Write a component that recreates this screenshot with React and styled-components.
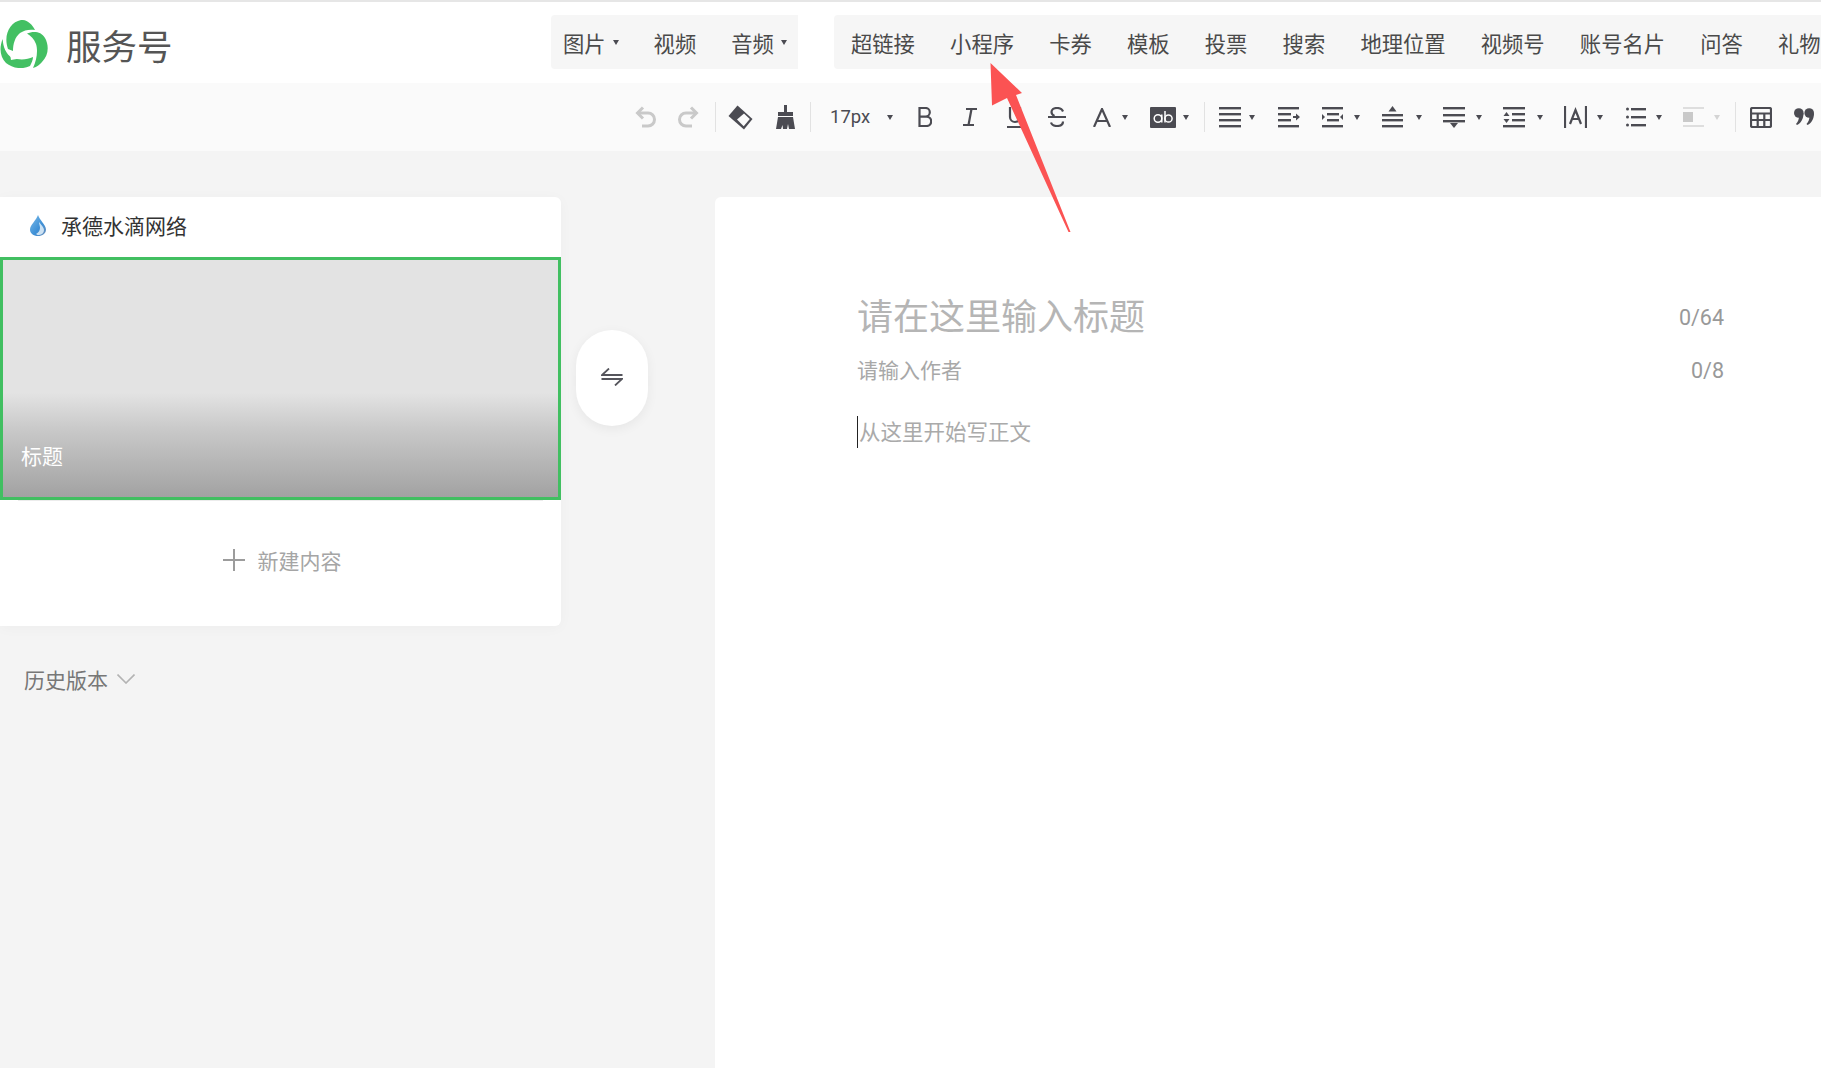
import React from 'react';
import styled, {createGlobalStyle} from 'styled-components';

const GlobalStyle = createGlobalStyle`
    html, body {
        margin: 0;
        padding: 0;
        height: 100%;
        background: #f4f4f4;
        overflow: hidden;
    }
    body {
        font-family: "Noto Sans", "Noto Sans CJK SC", sans-serif;
    }
`

const INK = '#4b4b52'
const OFF = '#c9c9c9'

const Undo = ({flip, color = OFF}) => (
    <svg width="21" height="22" viewBox="0 0 21 22" fill="none" stroke={color} strokeWidth="3" style={flip ? {transform: 'scaleX(-1)'} : undefined}>
        <path d="M3 7h10a6 6 0 0 1 0 13H7" />
        <path d="M8 1.500 2.500 7 8 12.500" />
    </svg>
)

const Eraser = () => (
    <svg width="25" height="25" viewBox="0 0 25 25">
        <path d="M9.500 0.500 24.500 14 16 24.500 0.500 11Z" fill={INK} />
        <path d="M9 14.500 16 8.500 21.800 14 15.700 21.300Z" fill="#fafafa" />
    </svg>
)

const Brush = () => (
    <svg width="19" height="24" viewBox="0 0 19 24" fill={INK}>
        <rect x="8" y="0" width="3" height="8" />
        <rect x="2" y="7" width="15" height="4" />
        <path d="M2 12h15l2 12h-6l-1-5-1 5H7l-.5-4-1.500 4H0Z" />
    </svg>
)

const Bold = () => (
    <svg width="14" height="20" viewBox="0 0 14 20" fill="none" stroke={INK} strokeWidth="2.200">
        <path d="M1.500 1h6a4.300 4.300 0 0 1 0 8.600h-6Zm0 8.600h7a4.700 4.700 0 0 1 0 9.400h-7Z" />
    </svg>
)

const Italic = () => (
    <svg width="14" height="18" viewBox="0 0 14 18" fill="none" stroke={INK} strokeWidth="2.200">
        <path d="M3 1h11M0 17h11M8.500 1 5.500 17" />
    </svg>
)

const Underline = () => (
    <svg width="16" height="22" viewBox="0 0 16 22" fill="none" stroke={INK} strokeWidth="2.200">
        <path d="M3 1v10a5 5 0 0 0 10 0V1M0 21h16" />
    </svg>
)

const Strike = () => (
    <svg width="18" height="20" viewBox="0 0 18 20" fill="none" stroke={INK} strokeWidth="2.200">
        <path d="M0 10h18M15 4.500C14 2 12 1 9 1 5.500 1 3.500 2.700 3.500 5c0 1.500 1 3 3 4M15 14.500c0 2.800-2.500 4.500-6 4.500-3 0-5.300-1.200-6-3.500" />
    </svg>
)

const LetterA = () => (
    <svg width="18" height="19" viewBox="0 0 18 19" fill="none" stroke={INK} strokeWidth="2.200">
        <path d="M1 19 9 1l8 18M4 13h10" />
    </svg>
)

const Highlight = () => (
    <svg width="26" height="21" viewBox="0 0 26 21">
        <rect width="26" height="21" rx="1" fill={INK} />
        <circle cx="8" cy="11.500" r="3.800" fill="none" stroke="#fff" strokeWidth="1.500" />
        <path d="M11.800 7.500V15.500M15 4v11.500" stroke="#fff" strokeWidth="1.500" />
        <circle cx="18.500" cy="11.500" r="3.600" fill="none" stroke="#fff" strokeWidth="1.500" />
    </svg>
)

// horizontal rules, all the paragraph icons are built from these
const Lines = ({rows, extra, color = INK}) => (
    <svg width="22" height="22" viewBox="0 0 22 22" fill={color}>
        {rows.map(([x, y, w], i) => <rect key={i} x={x} y={y} width={w} height="2.400" />)}
        {extra}
    </svg>
)

const alignRows = [[0, 1, 22], [0, 7, 22], [0, 13, 22], [0, 19, 22]]
const indentRows = [[0, 1, 21], [0, 7, 13], [0, 13, 13], [0, 19, 21]]
const outdentRows = [[0, 1, 21], [5, 7, 12], [5, 13, 12], [0, 19, 21]]
const aboveRows = [[0, 8, 21], [0, 13, 21], [0, 19, 21]]
const belowRows = [[0, 1, 22], [0, 8, 22], [0, 14, 22]]
const heightRows = [[0, 1, 22], [9, 7, 13], [9, 13, 13], [0, 19, 22]]
const listRows = [[5, 2, 15], [5, 10, 15], [5, 18, 15]]

const LetterSpacing = () => (
    <svg width="23" height="22" viewBox="0 0 23 22" fill="none" stroke={INK} strokeWidth="2.200">
        <path d="M1 0v22M22 0v22M6 18 11.500 4 17 18M8 13h7" />
    </svg>
)

const Picture = () => (
    <svg width="22" height="22" viewBox="0 0 22 22" fill={OFF}>
        <rect x="0" y="1" width="21" height="2" fill="#dedede" />
        <rect x="0" y="6" width="10" height="10" />
        <rect x="0" y="19" width="21" height="2" fill="#dedede" />
    </svg>
)

const TableIcon = () => (
    <svg width="22" height="21" viewBox="0 0 22 21" fill="none" stroke={INK} strokeWidth="2.200">
        <rect x="1" y="1" width="20" height="19" rx="1.500" />
        <path d="M1 6.500h20M1 13h20M7.700 6.500V20M14.300 6.500V20" />
    </svg>
)

const Quote = () => (
    <svg width="20" height="18" viewBox="0 0 20 18" fill={INK}>
        <circle cx="4.800" cy="5" r="4.800" />
        <path d="M9.500 5C9.500 11 7 15 3 17l-1-1c2-2 3-5 3-8Z" />
        <circle cx="15.200" cy="5" r="4.800" />
        <path d="M20 5c0 6-2.500 10-6.500 12l-1-1c2-2 3-5 3-8Z" />
    </svg>
)

const Logo = () => (
    <svg width="48" height="48" viewBox="0 0 48 48" fill="#43c063">
        <path d="M8 29C3 15 10 2 21 0C27-.5 32 4 35 10C30 9 24 10 20 13C15 17 13 24 13 31Z" />
        <path d="M27 13.500C33 11 41 11 45 18C49 25 49 35 42 42C40 44 37 47 33 48C37 40 38 30 36 24C34 19 31 16 27 13.500Z" />
        <path d="M2.700 19C-1 28 0 37 6 43C12 48 22 50 30 46C31.500 43 33 40 33 37C27 40 19 40 12 38C6 34 3 27 2.700 19Z" />
        <path d="M9.500 30.500 11 40 19.500 38.500Z" fill="#fff" />
    </svg>
)

const Drop = () => (
    <svg width="16" height="21" viewBox="0 0 16 21">
        <defs>
            <linearGradient id="dropFill" x1="0" y1="0" x2="1" y2="1">
                <stop offset="0" stopColor="#7dbce8" />
                <stop offset="0.600" stopColor="#3d8fd6" />
                <stop offset="1" stopColor="#6d8fb8" />
            </linearGradient>
        </defs>
        <path d="M8 0C9.500 5 16 10 16 14.500 16 18.500 12.500 21 8 21S0 18.500 0 14.500C0 10 6.500 5 8 0Z" fill="url(#dropFill)" />
        <path d="M9 7c2 3 5 5 5 8 0 3-2 4.500-5 5-1 0-2 0-3-1 2-1 4-3 4-6 0-2-1-4-1-6Z" fill="#e3f1fa" opacity=".85" />
    </svg>
)

const Swap = () => (
    <svg width="22" height="18" viewBox="0 0 22 18" fill="none" stroke="#55555c" strokeWidth="1.800">
        <path d="M21.500 7H1l7-6.500" />
        <path d="M.5 11H21l-7 6.500" />
    </svg>
)

const Chevron = () => (
    <svg width="18" height="10" viewBox="0 0 18 10" fill="none" stroke="#b3b3b3" strokeWidth="1.600">
        <path d="M.5.500 9 9 17.500.500" />
    </svg>
)

const PlusMark = () => (
    <svg width="22" height="22" viewBox="0 0 22 22" fill="none" stroke="#9c9c9c" strokeWidth="2">
        <path d="M11 0v22M0 11h22" />
    </svg>
)

const Page = styled.div`
    position: relative;
    width: 1821px;
    height: 1068px;
    overflow: hidden;
    background: #f4f4f4;
    display: flex;
    flex-direction: column;
`

const Header = styled.header`
    height: 83px;
    flex: none;
    box-sizing: border-box;
    border-top: 2px solid #e6e6e6;
    background: #fff;
    display: flex;
    align-items: center;
`

const Brand = styled.div`
    width: 551px;
    flex: none;
    display: flex;
    align-items: center;
    gap: 18px;
    margin-top: 3px;
    font-size: 35.500px;
    color: #555;
`

const TabGroup = styled.nav`
    height: 54px;
    margin-top: -1px;
    flex: none;
    display: flex;
    align-items: center;
    gap: ${p => p.$gap}px;
    box-sizing: border-box;
    padding-left: ${p => p.$pad}px;
    width: ${p => p.$width}px;
    margin-left: ${p => p.$left || 0}px;
    background: #f6f6f6;
    border-radius: 4px 0 0 4px;
    font-size: 21.300px;
    color: #4a4a4a;
    white-space: nowrap;
    overflow: hidden;
`

const Tab = styled.span`
    display: inline-flex;
    align-items: center;
    gap: 7px;
`

const Caret = styled.i`
    display: inline-block;
    width: 0;
    height: 0;
    flex: none;
    border-left: 3px solid transparent;
    border-right: 3px solid transparent;
    border-top: 5px solid ${p => p.$off ? '#d4d4d4' : '#4b4b52'};
`

const Toolbar = styled.div`
    height: 68px;
    flex: none;
    background: #fafafa;
    display: flex;
    align-items: center;
    padding-left: 635px;
    overflow: hidden;
`

const Tool = styled.span`
    flex: none;
    display: inline-flex;
    align-items: center;
    margin-left: ${p => p.$gap || 0}px;
    gap: ${p => p.$caretGap || 0}px;
    color: #4b4b52;
`

const SizeLabel = styled.span`
    width: 40px;
    font-family: Roboto, sans-serif;
    font-size: 18.500px;
`

const Divider = styled.i`
    flex: none;
    width: 1px;
    height: 30px;
    margin-left: ${p => p.$gap}px;
    background: #e2e2e2;
`

const Workspace = styled.main`
    flex: 1;
    display: flex;
    align-items: flex-start;
    padding-top: 46px;
    min-height: 0;
`

const Side = styled.aside`
    width: 561px;
    flex: none;
`

const Card = styled.section`
    height: 429px;
    background: #fff;
    border-radius: 0 6px 6px 0;
    box-shadow: 0 2px 14px rgba(0, 0, 0, .03);
`

const CardHead = styled.div`
    height: 60px;
    box-sizing: border-box;
    padding: 0 0 4px 30px;
    display: flex;
    align-items: center;
    gap: 15px;
    font-size: 21px;
    color: #333;
`

const Cover = styled.div`
    height: 243px;
    box-sizing: border-box;
    border: 3px solid #41bf61;
    background: linear-gradient(to bottom, #e3e3e3 0%, #e3e3e3 56%, #c8c8c8 72%, #a2a2a2 100%);
    display: flex;
    align-items: flex-end;
    padding: 0 0 27px 18px;
    font-size: 21px;
    color: #fff;
`

const AddRow = styled.div`
    height: 126px;
    box-sizing: border-box;
    margin: 0 18px;
    padding: 0 0 7px 3px;
    border-top: 1px solid #ececec;
    display: flex;
    align-items: center;
    justify-content: center;
    gap: 13px;
    font-size: 21px;
    color: #a5a5a5;
`

const History = styled.div`
    margin: 38px 0 0 24px;
    display: flex;
    align-items: center;
    gap: 9px;
    font-size: 21px;
    color: #777;
`

const Swapper = styled.button`
    flex: none;
    width: 72px;
    height: 96px;
    margin: 133px 0 0 15px;
    padding: 0 0 2px;
    border: 0;
    border-radius: 36px;
    background: #fff;
    box-shadow: 0 3px 12px rgba(0, 0, 0, .06);
    display: flex;
    align-items: center;
    justify-content: center;
`

const Editor = styled.section`
    flex: 1;
    align-self: stretch;
    margin-left: 67px;
    padding: 103px 97px 0 142px;
    background: #fff;
    border-radius: 6px 0 0 0;
`

const Row = styled.div`
    display: flex;
    align-items: center;
    justify-content: space-between;
    height: ${p => p.$height}px;
    margin-top: ${p => p.$top || 0}px;
    color: ${p => p.$color};
    font-size: ${p => p.$size}px;
`

const RowText = styled.span`
    margin-bottom: ${p => p.$lift}px;
`

const Count = styled.span`
    font-family: Roboto, sans-serif;
    font-size: 21.500px;
    color: #999;
`

const Body = styled.div`
    box-sizing: border-box;
    height: 32px;
    margin-top: 30px;
    padding: 0 0 3px 1px;
    border-left: 1px solid #222;
    display: flex;
    align-items: center;
    font-size: 21.500px;
    color: #aaa;
`

const Arrow = styled.svg`
    position: absolute;
    left: 985px;
    top: 60px;
    pointer-events: none;
`

const tools = [
    {icon: <Undo />},
    {icon: <Undo flip />, gap: 22},
    {line: 16},
    {icon: <Eraser />, gap: 12},
    {icon: <Brush />, gap: 23},
    {line: 15},
    {icon: <SizeLabel>17px</SizeLabel>, gap: 19, caret: 17},
    {icon: <Bold />, gap: 25},
    {icon: <Italic />, gap: 31},
    {icon: <Underline />, gap: 30},
    {icon: <Strike />, gap: 25},
    {icon: <LetterA />, gap: 27, caret: 11},
    {icon: <Highlight />, gap: 22, caret: 7},
    {line: 15},
    {icon: <Lines rows={alignRows} />, gap: 14, caret: 8},
    {icon: <Lines rows={indentRows} extra={<path d="M15 10h3V7.500l4 3.500-4 3.500V12h-3Z" />} />, gap: 23},
    {icon: <Lines rows={outdentRows} extra={<><path d="M0 8l3 3-3 3Z" /><path d="M21 8l-3 3 3 3Z" /></>} />, gap: 22, caret: 10},
    {icon: <Lines rows={aboveRows} extra={<path d="M10.500 0l4 5.500h-8Z" />} />, gap: 22, caret: 12},
    {icon: <Lines rows={belowRows} extra={<path d="M11 22l-4-5h8Z" />} />, gap: 21, caret: 11},
    {icon: <Lines rows={heightRows} extra={<><path d="M3.500 6l3 4h-6Z" /><path d="M3.500 17l3-4h-6Z" /></>} />, gap: 21, caret: 12},
    {icon: <LetterSpacing />, gap: 21, caret: 10},
    {icon: <Lines rows={listRows} extra={<><circle cx="1.500" cy="3" r="1.500" /><circle cx="1.500" cy="11" r="1.500" /><circle cx="1.500" cy="19" r="1.500" /></>} />, gap: 23, caret: 8},
    {icon: <Picture />, gap: 21, caret: 9, off: true},
    {line: 15},
    {icon: <TableIcon />, gap: 14},
    {icon: <Quote />, gap: 22},
]

const App = () => {
    return (
        <Page>
            <GlobalStyle />
            <Header>
                <Brand>
                    <Logo />
                    服务号
                </Brand>
                <TabGroup $width={247} $pad={12} $gap={35}>
                    <Tab>图片<Caret /></Tab>
                    <Tab>视频</Tab>
                    <Tab>音频<Caret /></Tab>
                </TabGroup>
                <TabGroup $width={987} $pad={17} $gap={35.2} $left={36}>
                    {['超链接', '小程序', '卡券', '模板', '投票', '搜索', '地理位置', '视频号', '账号名片', '问答', '礼物'].map(name => (
                        <Tab key={name}>{name}</Tab>
                    ))}
                </TabGroup>
            </Header>
            <Toolbar>
                {tools.map((tool, i) => tool.line
                    ? <Divider key={i} $gap={tool.line} />
                    : (
                        <Tool key={i} $gap={tool.gap} $caretGap={tool.caret}>
                            {tool.icon}
                            {tool.caret && <Caret $off={tool.off} />}
                        </Tool>
                    ))}
            </Toolbar>
            <Workspace>
                <Side>
                    <Card>
                        <CardHead><Drop />承德水滴网络</CardHead>
                        <Cover>标题</Cover>
                        <AddRow><PlusMark />新建内容</AddRow>
                    </Card>
                    <History>历史版本<Chevron /></History>
                </Side>
                <Swapper><Swap /></Swapper>
                <Editor>
                    <Row $height={34} $size={36} $color="#b5b5b5"><RowText $lift={5}>请在这里输入标题</RowText><Count>0/64</Count></Row>
                    <Row $height={32} $top={20} $size={21} $color="#a8a8a8"><RowText $lift={3}>请输入作者</RowText><Count>0/8</Count></Row>
                    <Body>从这里开始写正文</Body>
                </Editor>
            </Workspace>
            <Arrow width="90" height="175" viewBox="985 60 90 175">
                <path d="M990.500 63 1022 93 1016 95 1070.500 232 1068.500 232 1007 98 992 105.500Z" fill="#fb5353" />
            </Arrow>
        </Page>
    )
}

export default App
